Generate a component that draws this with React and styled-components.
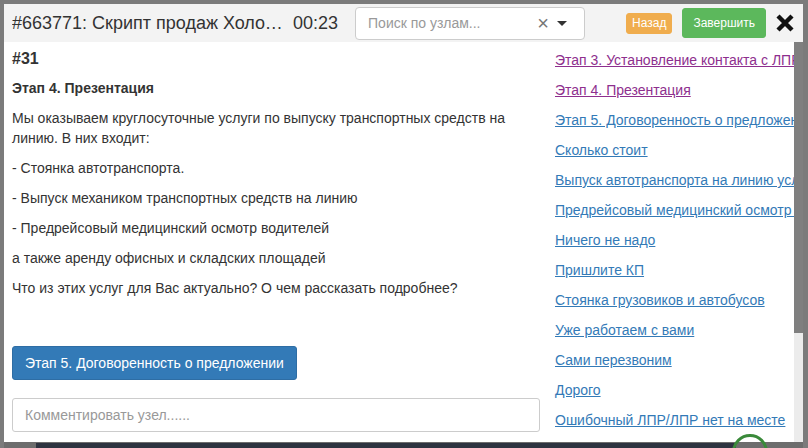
import React from "react";
import styled, { createGlobalStyle } from "styled-components";

const GlobalStyle = createGlobalStyle`
  html, body {
    margin: 0;
    padding: 0;
    background: #7b7b7b;
  }
  * {
    box-sizing: border-box;
  }
`;

const links = [
  { text: "Этап 3. Установление контакта с ЛПР", visited: true },
  { text: "Этап 4. Презентация", visited: true },
  { text: "Этап 5. Договоренность о предложении" },
  { text: "Сколько стоит" },
  { text: "Выпуск автотранспорта на линию услуги" },
  { text: "Предрейсовый медицинский осмотр водителей" },
  { text: "Ничего не надо" },
  { text: "Пришлите КП" },
  { text: "Стоянка грузовиков и автобусов" },
  { text: "Уже работаем с вами" },
  { text: "Сами перезвоним" },
  { text: "Дорого" },
  { text: "Ошибочный ЛПР/ЛПР нет на месте" },
];

const paragraphs = [
  "Мы оказываем круглосуточные услуги по выпуску транспортных средств на линию. В них входит:",
  "- Стоянка автотранспорта.",
  "- Выпуск механиком транспортных средств на линию",
  "- Предрейсовый медицинский осмотр водителей",
  "а также аренду офисных и складских площадей",
  "Что из этих услуг для Вас актуально? О чем рассказать подробнее?",
];

const CloseIcon = () => (
  <svg width="20" height="18" viewBox="0 0 20 18">
    <path d="M3 2 L17 16 M17 2 L3 16" stroke="#111" strokeWidth="4.4" strokeLinecap="butt" />
  </svg>
);

const App = () => {
  return (
    <Page>
      <GlobalStyle />
      <Dialog>
        <Header>
          <Title>#663771: Скрипт продаж Холодный звонок</Title>
          <Timer>00:23</Timer>
          <Search>
            <Placeholder>Поиск по узлам...</Placeholder>
            <Clear>×</Clear>
            <Caret />
          </Search>
          <Spacer />
          <Button $color="#f0ad4e" $size="xs">Назад</Button>
          <Button $color="#5cb85c" $size="sm">Завершить</Button>
          <CloseButton>
            <CloseIcon />
          </CloseButton>
        </Header>
        <Body>
          <Main>
            <NodeId>#31</NodeId>
            <NodeTitle>Этап 4. Презентация</NodeTitle>
            {paragraphs.map((p) => (
              <Paragraph key={p}>{p}</Paragraph>
            ))}
            <NextButton>Этап 5. Договоренность о предложении</NextButton>
            <Comment placeholder="Комментировать узел......" />
          </Main>
          <Links>
            {links.map((l) => (
              <LinkItem key={l.text} $visited={l.visited}>
                {l.text}
              </LinkItem>
            ))}
          </Links>
          <Scrollbar>
            <Thumb />
          </Scrollbar>
        </Body>
      </Dialog>
      <Backdrop>
        <BackdropBar />
        <BackdropCircle />
      </Backdrop>
    </Page>
  );
};

const Page = styled.div`
  width: 808px;
  height: 448px;
  padding: 4px 5px 0 4px;
  display: flex;
  flex-direction: column;
  overflow: hidden;
  font-family: "Liberation Sans", Arial, sans-serif;
  color: #333;
`;

const Dialog = styled.div`
  height: 438px;
  flex-shrink: 0;
  background: #fff;
  display: flex;
  flex-direction: column;
  overflow: hidden;
`;

const Header = styled.div`
  height: 38px;
  flex-shrink: 0;
  background: #f3f3f3;
  display: flex;
  align-items: center;
  padding: 0 8px;
`;

const Title = styled.div`
  font-size: 18px;
  max-width: 272px;
  white-space: nowrap;
  overflow: hidden;
  text-overflow: ellipsis;
`;

const Timer = styled.div`
  font-size: 18px;
  margin-left: 9px;
`;

const Search = styled.div`
  margin-left: 17px;
  width: 230px;
  height: 33px;
  background: #fff;
  border: 1px solid #ccc;
  border-radius: 4px;
  display: flex;
  align-items: center;
  padding: 0 17px 0 12px;
`;

const Placeholder = styled.span`
  flex: 1;
  font-size: 14px;
  color: #999;
`;

const Clear = styled.span`
  font-size: 20px;
  color: #777;
  line-height: 1;
  margin-right: 8px;
`;

const Caret = styled.span`
  width: 0;
  height: 0;
  border-left: 5px solid transparent;
  border-right: 5px solid transparent;
  border-top: 5px solid #333;
`;

const Spacer = styled.div`
  flex: 1;
`;

const Button = styled.button`
  font-family: inherit;
  font-size: 12px;
  color: #fff;
  background: ${(p) => p.$color};
  border: 1px solid ${(p) => p.$color};
  border-radius: 3px;
  height: ${(p) => (p.$size === "xs" ? "21px" : "30px")};
  padding: ${(p) => (p.$size === "xs" ? "0 5px" : "0 10px")};
  margin-left: ${(p) => (p.$size === "xs" ? "0" : "10px")};
  line-height: 1;
`;

const CloseButton = styled.div`
  margin-left: 9px;
  display: flex;
  align-items: center;
`;

const Body = styled.div`
  flex: 1;
  display: flex;
  overflow: hidden;
`;

const Main = styled.div`
  width: 536px;
  flex-shrink: 0;
  padding: 6px 0 0 8px;
  display: flex;
  flex-direction: column;
  align-items: flex-start;
`;

const NodeId = styled.div`
  font-size: 16px;
  font-weight: bold;
  line-height: 22px;
  margin-bottom: 8px;
`;

const NodeTitle = styled.div`
  font-size: 14px;
  font-weight: bold;
  line-height: 20px;
  margin-bottom: 10px;
`;

const Paragraph = styled.p`
  margin: 0 0 10px;
  font-size: 14px;
  line-height: 20px;
`;

const NextButton = styled.button`
  margin-top: 38px;
  font-family: inherit;
  font-size: 14px;
  color: #fff;
  background: #337ab7;
  border: 1px solid #2e6da4;
  border-radius: 3px;
  height: 34px;
  padding: 0 12px;
`;

const Comment = styled.input`
  margin-top: 18px;
  width: 528px;
  height: 34px;
  font-family: inherit;
  font-size: 14px;
  padding: 6px 12px;
  border: 1px solid #ccc;
  border-radius: 3px;
  outline: none;
  &::placeholder {
    color: #999;
  }
`;

const Links = styled.div`
  flex: 1;
  min-width: 0;
  overflow: hidden;
  padding: 8px 0 0 15px;
  display: flex;
  flex-direction: column;
`;

const LinkItem = styled.a`
  font-size: 14px;
  line-height: 20px;
  margin-bottom: 10px;
  white-space: nowrap;
  text-decoration: underline;
  color: ${(p) => (p.$visited ? "#8e2f8e" : "#337ab7")};
  cursor: pointer;
`;

const Scrollbar = styled.div`
  width: 9px;
  flex-shrink: 0;
  background: #ececec;
  display: flex;
  flex-direction: column;
`;

const Thumb = styled.div`
  height: 291px;
  background: #7f7f7f;
`;

const Backdrop = styled.div`
  flex: 1;
  position: relative;
  background: #6d6d6d;
`;

const BackdropBar = styled.div`
  margin: 1px 0 0 32px;
  width: 700px;
  height: 6px;
  background: #2d3340;
`;

const BackdropCircle = styled.div`
  position: absolute;
  left: 728px;
  top: -8px;
  width: 36px;
  height: 36px;
  border: 3px solid #3a8a3a;
  border-radius: 50%;
`;

export default App;
